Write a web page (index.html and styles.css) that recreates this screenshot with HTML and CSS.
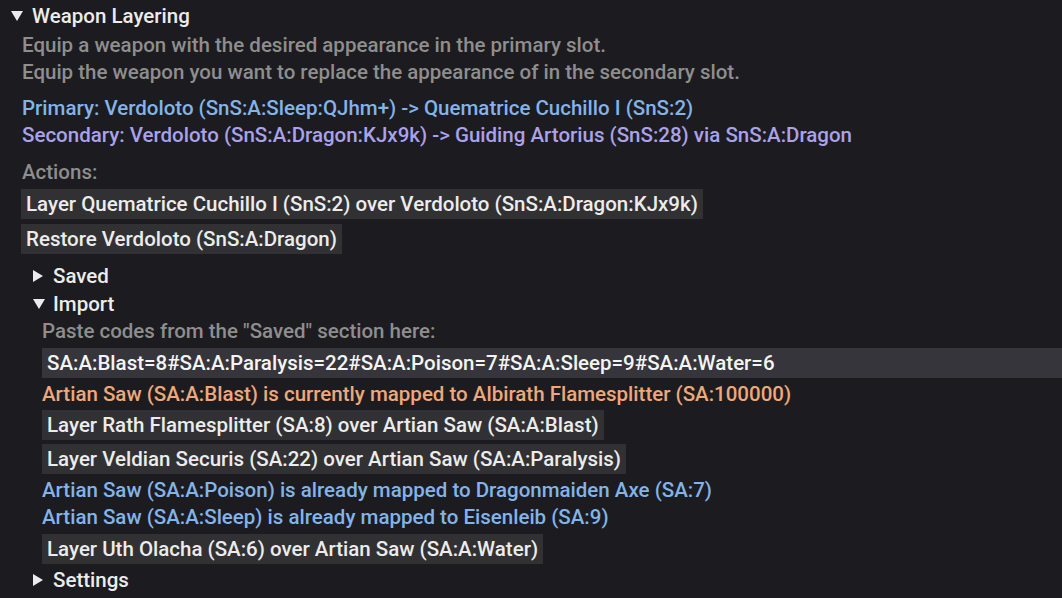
FILE: index.html
```html
<!DOCTYPE html>
<html>
<head>
<meta charset="utf-8">
<link rel="stylesheet" href="styles.css">
</head>
<body>
<div class="panel">
  <div class="header top">
    <svg class="tri-down" width="14" height="12" viewBox="0 0 14 12"><polygon points="1,1 13,1 7,11" fill="#ececec"/></svg>
    <span class="title">Weapon Layering</span>
  </div>
  <div class="body">
    <div class="desc">
      <div>Equip a weapon with the desired appearance in the primary slot.</div>
      <div>Equip the weapon you want to replace the appearance of in the secondary slot.</div>
    </div>
    <div class="slots">
      <div class="blue">Primary: Verdoloto (SnS:A:Sleep:QJhm+) -&gt; Quematrice Cuchillo I (SnS:2)</div>
      <div class="purple">Secondary: Verdoloto (SnS:A:Dragon:KJx9k) -&gt; Guiding Artorius (SnS:28) via SnS:A:Dragon</div>
    </div>
    <div class="label">Actions:</div>
    <div class="btns">
      <span class="btn">Layer Quematrice Cuchillo I (SnS:2) over Verdoloto (SnS:A:Dragon:KJx9k)</span>
      <span class="btn">Restore Verdoloto (SnS:A:Dragon)</span>
    </div>
    <div class="sub">
      <div class="header">
        <svg class="tri-right" width="12" height="14" viewBox="0 0 12 14"><polygon points="1,1 11,7 1,13" fill="#ececec"/></svg>
        <span>Saved</span>
      </div>
      <div class="header">
        <svg class="tri-down sub-down" width="14" height="12" viewBox="0 0 14 12"><polygon points="1,1 13,1 7,11" fill="#ececec"/></svg>
        <span>Import</span>
      </div>
      <div class="import">
        <div class="label">Paste codes from the "Saved" section here:</div>
        <div class="input">SA:A:Blast=8#SA:A:Paralysis=22#SA:A:Poison=7#SA:A:Sleep=9#SA:A:Water=6</div>
        <div class="orange msg">Artian Saw (SA:A:Blast) is currently mapped to Albirath Flamesplitter (SA:100000)</div>
        <div class="btns">
          <span class="btn">Layer Rath Flamesplitter (SA:8) over Artian Saw (SA:A:Blast)</span>
          <span class="btn">Layer Veldian Securis (SA:22) over Artian Saw (SA:A:Paralysis)</span>
        </div>
        <div class="msgs">
          <div class="blue">Artian Saw (SA:A:Poison) is already mapped to Dragonmaiden Axe (SA:7)</div>
          <div class="blue">Artian Saw (SA:A:Sleep) is already mapped to Eisenleib (SA:9)</div>
        </div>
        <div class="btns">
          <span class="btn">Layer Uth Olacha (SA:6) over Artian Saw (SA:A:Water)</span>
        </div>
      </div>
      <div class="header">
        <svg class="tri-right" width="12" height="14" viewBox="0 0 12 14"><polygon points="1,1 11,7 1,13" fill="#ececec"/></svg>
        <span>Settings</span>
      </div>
    </div>
  </div>
</div>
</body>
</html>
```
FILE: styles.css
```css
html, body {
  margin: 0;
  padding: 0;
  background: #1c1b1f;
  width: 1062px;
  height: 598px;
  overflow: hidden;
}
body {
  font-family: Roboto, "Liberation Sans", sans-serif;
  font-size: 20.5px;
  font-weight: 500;
  color: #ececec;
  line-height: 27px;
}
.panel {
  padding-top: 2px;
}
.header {
  display: flex;
  align-items: center;
  height: 28px;
}
.top {
  padding-left: 10px;
}
.tri-down {
  margin-right: 8px;
}
.sub-down {
  margin-right: 7px;
}
.tri-right {
  margin-right: 9px;
}
.body {
  padding-left: 22px;
}
.desc {
  color: #8e8e8e;
  margin-top: 2px;
}
.slots {
  margin-top: 9px;
}
.blue { color: #82b4ea; }
.purple { color: #aaa2ea; }
.orange { color: #eea87a; }
.label {
  color: #8e8e8e;
  margin-top: 10px;
}
.btns {
  display: flex;
  flex-direction: column;
  align-items: flex-start;
  gap: 5px;
  margin-top: 3px;
}
.btn {
  background: #313134;
  height: 30px;
  line-height: 30px;
  padding: 0 5px;
  margin-left: -1px;
  color: #ececec;
}
.sub {
  margin-top: 8px;
  padding-left: 10px;
}
.import {
  padding-left: 10px;
}
.import .label {
  margin-top: 0;
}
.input {
  background: #35353b;
  height: 30px;
  line-height: 30px;
  padding: 0 5px;
  margin-top: 3px;
  color: #f4f4f4;
}
.msg {
  margin-top: 3px;
}
.msgs {
  margin-top: 3px;
}
.import .btns {
  margin-top: 2px;
  gap: 4px;
}
.import .btn {
  margin-left: 0;
}
.msgs + .btns {
  margin-top: 3px;
}
.import + .header {
  margin-top: 2px;
}
```
